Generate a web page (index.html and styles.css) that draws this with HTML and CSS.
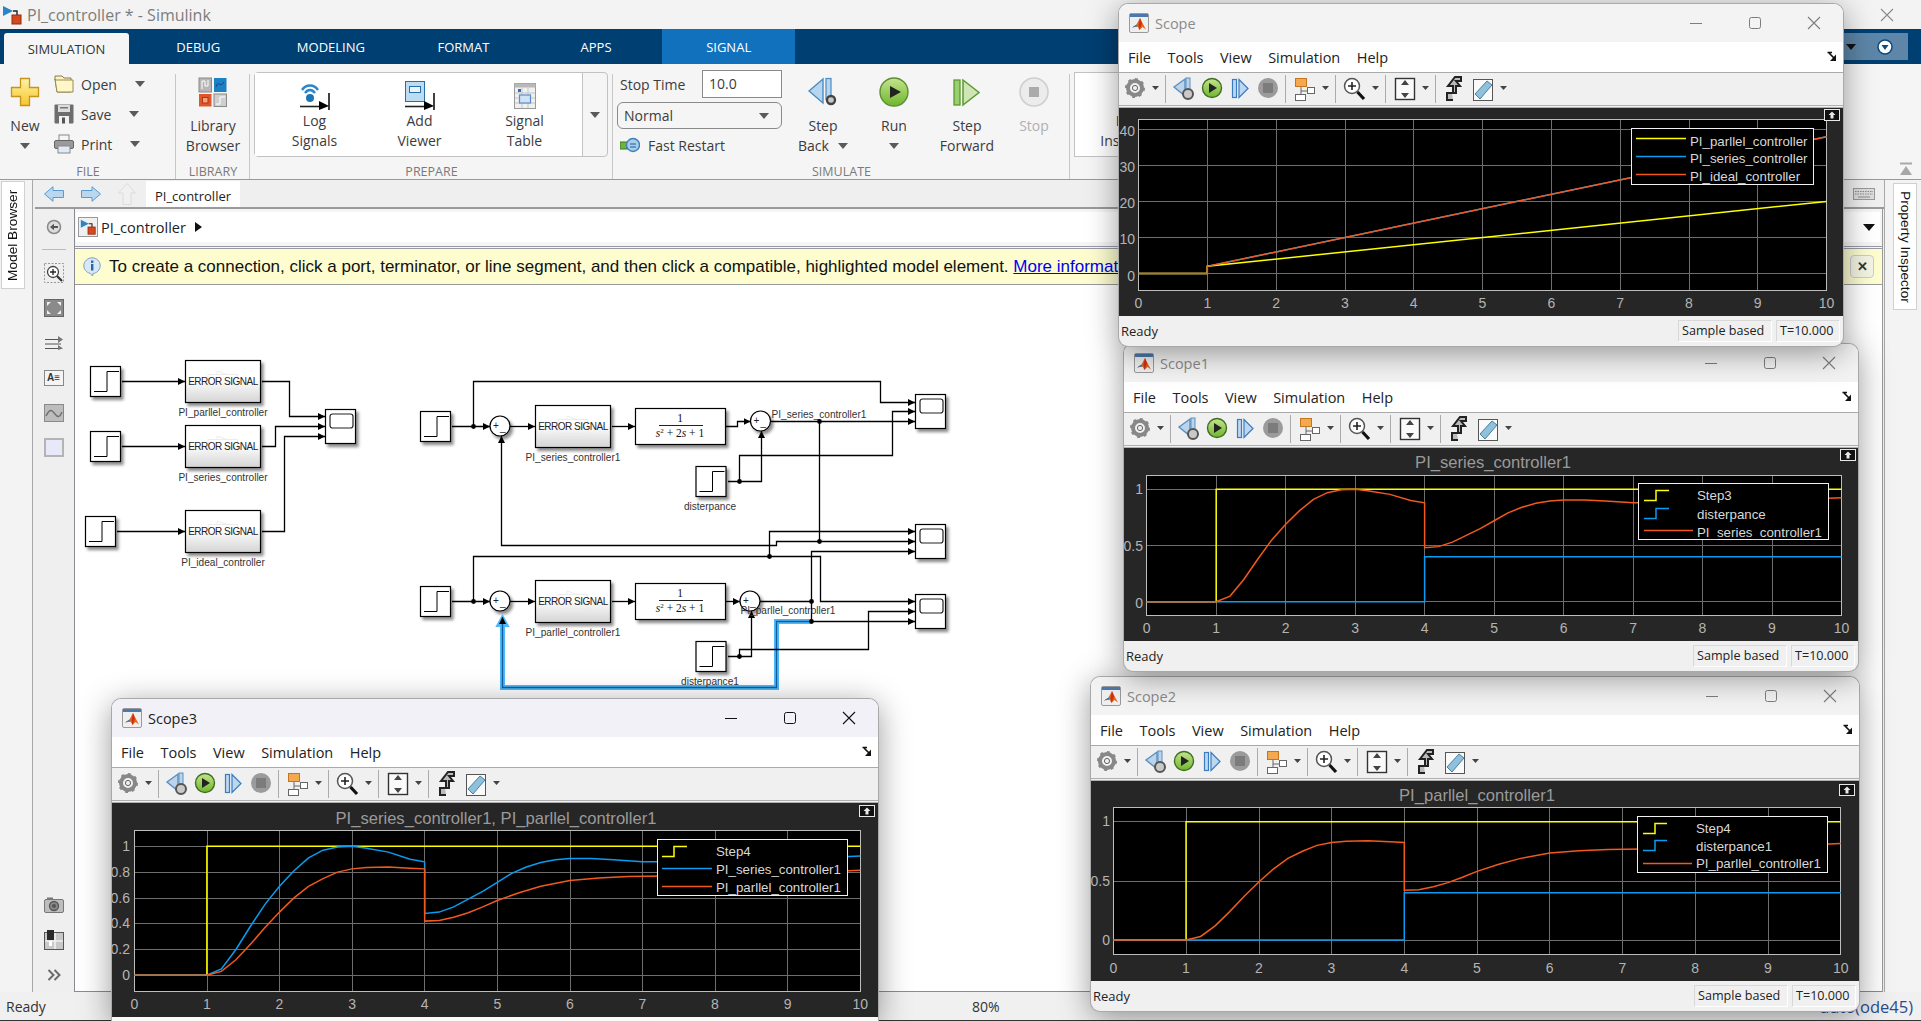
FILE: index.html
```html
<!DOCTYPE html>
<html lang="en">
<head>
  <meta charset="UTF-8">
  <title>PI_controller * - Simulink</title>
  <link rel="stylesheet" href="styles.css">
</head>
<body>

<!-- shared icons -->
<svg class="defs" width="0" height="0">
  <defs>
    <linearGradient id="blockFill" x1="0" y1="0" x2="0" y2="1">
      <stop offset="0.45" stop-color="#ffffff"/>
      <stop offset="1" stop-color="#d4d4d4"/>
    </linearGradient>
    <linearGradient id="runFill" x1="0" y1="0" x2="0" y2="1">
      <stop offset="0" stop-color="#c4e58c"/>
      <stop offset="1" stop-color="#6fb52e"/>
    </linearGradient>
    <linearGradient id="plusFill" x1="0" y1="0" x2="0" y2="1">
      <stop offset="0" stop-color="#fff3a6"/>
      <stop offset="1" stop-color="#f6c52a"/>
    </linearGradient>
    <filter id="blockShadow" x="-20%" y="-20%" width="150%" height="150%">
      <feDropShadow dx="2.5" dy="3" stdDeviation="1.6" flood-color="#000" flood-opacity="0.45"/>
    </filter>
    <marker id="arrow" viewBox="0 0 7 7" refX="7" refY="3.5" markerWidth="7" markerHeight="7" markerUnits="userSpaceOnUse" orient="auto">
      <path d="M0 0L7 3.5L0 7Z" fill="#000"/>
    </marker>

    <g id="stepBlock" filter="url(#blockShadow)">
      <rect x="0.5" y="0.5" width="30" height="30" fill="#fff" stroke="#000" stroke-width="1.2"/>
      <path d="M4 25.5H17V5.5H29" fill="none" stroke="#000"/>
    </g>
    <g id="scopeBlock" filter="url(#blockShadow)">
      <rect x="0.5" y="0.5" width="30" height="34" fill="#fff" stroke="#000" stroke-width="1.2"/>
      <rect x="5" y="5" width="23" height="14" rx="2.5" fill="#fff" stroke="#222" stroke-width="1.2"/>
    </g>
    <g id="errorBlock" filter="url(#blockShadow)">
      <rect x="0.5" y="0.5" width="75" height="42" fill="url(#blockFill)" stroke="#000" stroke-width="1.2"/>
      <path d="M23 14.5H52.5V28.5H23ZM32 14.5V11L42 14.5" fill="none" stroke="#ececec"/>
    </g>
    <g id="tfBlock" filter="url(#blockShadow)">
      <rect x="0.5" y="0.5" width="90" height="36" fill="#fff" stroke="#000" stroke-width="1.2"/>
    </g>
    <g id="sumBlock" filter="url(#blockShadow)">
      <circle cx="0" cy="0" r="10" fill="#fff" stroke="#000" stroke-width="1.2"/>
    </g>

    <symbol id="matlabIcon" viewBox="0 0 20 20">
      <rect x="0.5" y="0.5" width="19" height="19" rx="1.5" fill="#efefef" stroke="#9a9a9a"/>
      <rect x="1" y="1" width="18" height="3" fill="#4b79ab"/>
      <path d="M3 14.5L7.5 11.5L11 5L14 11L17 16.5L13.5 14L10.5 17L8.5 13.5Z" fill="#e8641b"/>
      <path d="M3 14.5L7.5 11.5L8.5 13.5Z" fill="#3c7fb8"/>
      <path d="M11 5L13 10.5L10.5 17L9.5 12Z" fill="#c8321a"/>
    </symbol>

    <symbol id="simulinkIcon" viewBox="0 0 20 20">
      <path d="M1 1L11 6L1 11Z" fill="#2a85c7"/>
      <path d="M11 6L15 6V11" fill="none" stroke="#222" stroke-width="1.4"/>
      <rect x="10" y="10" width="9" height="9" fill="#d6491f" stroke="#8f2c10"/>
    </symbol>

    <symbol id="expandIcon" viewBox="0 0 16 12">
      <rect x="0.5" y="0.5" width="15" height="11" fill="#111" stroke="#e8e8e8"/>
      <path d="M8 2.5L11.5 6H9.5V9.5H6.5V6H4.5Z" fill="#e8e8e8"/>
    </symbol>

    <symbol id="dockIcon" viewBox="0 0 10 12">
      <path d="M0.5 1.5H5M2 2L7 7" fill="none" stroke="#111" stroke-width="1.6"/>
      <path d="M9 3.5V10H3Z" fill="#111"/>
    </symbol>

    <symbol id="scopeTools" viewBox="0 0 390 32">
      <!-- gear -->
      <circle cx="16" cy="15" r="7" fill="none" stroke="#888" stroke-width="4"/>
      <circle cx="16" cy="15" r="9" fill="none" stroke="#888" stroke-width="2" stroke-dasharray="3 4"/>
      <circle cx="16" cy="15" r="2.6" fill="#eee" stroke="#666"/>
      <path d="M33 13H40L36.5 17Z" fill="#444"/>
      <path d="M46.5 2V30M166.5 2V30M216.5 2V30M266.5 2V30M316.5 2V30" stroke="#ababab"/>
      <!-- step back -->
      <path d="M55 14L66 6V23Z" fill="#bcd4ea" stroke="#5a8fbf" stroke-width="1.4"/>
      <rect x="67" y="5" width="4" height="17" fill="#bcd4ea" stroke="#5a8fbf"/>
      <circle cx="69" cy="21" r="5" fill="#c9c9c9" stroke="#555" stroke-width="2"/>
      <!-- run -->
      <circle cx="93" cy="15" r="9.5" fill="url(#runFill)" stroke="#3f6e22" stroke-width="1.4"/>
      <path d="M90 10L98 15L90 20Z" fill="#222"/>
      <!-- step forward -->
      <rect x="113.5" y="6.5" width="4" height="18" fill="#bcd8f0" stroke="#3b7cc0" stroke-width="1.2"/>
      <path d="M120 6.5L129 15.5L120 24.5Z" fill="#bcd8f0" stroke="#3b7cc0" stroke-width="1.2"/>
      <!-- stop -->
      <circle cx="149" cy="15" r="10" fill="#9b9b9b"/>
      <rect x="144" y="10" width="10" height="10" fill="#7c7c7c"/>
      <!-- model link -->
      <rect x="176.5" y="5.5" width="11" height="8" fill="#f5a94f" stroke="#c4761c"/>
      <rect x="188.5" y="14.5" width="7" height="6" fill="#fff" stroke="#666"/>
      <rect x="176.5" y="21.5" width="10" height="6" fill="#fff" stroke="#666"/>
      <path d="M182 14V18H188M182 21V18" fill="none" stroke="#666"/>
      <path d="M203 13H210L206.5 17Z" fill="#444"/>
      <!-- zoom -->
      <circle cx="233" cy="13" r="7.5" fill="#fff" stroke="#555" stroke-width="1.5"/>
      <path d="M229 13H237M233 9V17" stroke="#222" stroke-width="1.6"/>
      <path d="M238.5 19L245 26" stroke="#111" stroke-width="3.2"/>
      <path d="M253 13H260L256.5 17Z" fill="#444"/>
      <!-- autoscale -->
      <rect x="276.5" y="5.5" width="19" height="21" fill="#fafafa" stroke="#333" stroke-width="1.4"/>
      <path d="M286 7L290 12H282ZM286 25L290 20H282Z" fill="#444"/>
      <path d="M303 13H310L306.5 17Z" fill="#444"/>
      <!-- plot type -->
      <path d="M334 27H328V20H334V13H329L336 4H342V8H337L341 13H337V20H333" fill="#bbb" stroke="#222" stroke-width="2"/>
      <!-- ruler -->
      <rect x="354.5" y="6.5" width="19" height="21" fill="#fafafa" stroke="#555"/>
      <path d="M356 21L368 8L373 12L361 26Z" fill="#8fc0dc" stroke="#4a7f9c"/>
      <path d="M381 13H388L384.5 17Z" fill="#444"/>
    </symbol>
  </defs>
</svg>

<div class="app">

  <header class="titlebar">
    <svg class="title-icon" width="20" height="20"><use href="#simulinkIcon"/></svg>
    <span class="title-text">PI_controller * - Simulink</span>
    <svg class="title-close" width="14" height="14" viewBox="0 0 14 14"><path d="M1 1L13 13M13 1L1 13" stroke="#8a8a8a" stroke-width="1.1"/></svg>
  </header>

  <nav class="tabs">
    <div class="tab tab-active">SIMULATION</div>
    <div class="tab">DEBUG</div>
    <div class="tab">MODELING</div>
    <div class="tab">FORMAT</div>
    <div class="tab">APPS</div>
    <div class="tab tab-signal">SIGNAL</div>
    <div class="quick-access">
      <i class="caret caret-black"></i>
      <svg width="16" height="16" viewBox="0 0 16 16"><circle cx="8" cy="8" r="7" fill="#fff" stroke="#0b4a80" stroke-width="1.5"/><path d="M4.5 6H11.5L8 11Z" fill="#0b4a80"/></svg>
    </div>
  </nav>

  <div class="ribbon">

    <section class="rib-group group-file">
      <div class="rib-body">
        <div class="rb rb-new">
          <svg class="rb-icon" width="30" height="30" viewBox="0 0 30 30"><path d="M10.5 1.5H19.5V10.5H28.5V19.5H19.5V28.5H10.5V19.5H1.5V10.5H10.5Z" fill="url(#plusFill)" stroke="#c4951a" stroke-width="1.3"/></svg>
          <span>New</span>
          <span class="rb-line"><i class="caret"></i></span>
        </div>
        <div class="file-list">
          <div class="file-row">
            <svg width="20" height="20" viewBox="0 0 20 20"><path d="M1 5V2H8L10 4H17V18H3Z" fill="#fdf3c0" stroke="#8a7a4a"/><path d="M1 5L3 18H19V6H1Z" fill="#fff6c9" stroke="#9a8a50"/></svg>
            <span>Open</span><i class="caret"></i>
          </div>
          <div class="file-row">
            <svg width="20" height="20" viewBox="0 0 20 20"><rect x="0.5" y="0.5" width="19" height="19" rx="1" fill="#6d6d6d"/><rect x="4" y="1" width="12" height="7" fill="#dcdcdc"/><rect x="6" y="3" width="8" height="1.5" fill="#777"/><rect x="5" y="12" width="10" height="8" fill="#f2f2f2"/><rect x="8" y="13.5" width="3" height="6" fill="#555"/></svg>
            <span>Save</span><i class="caret"></i>
          </div>
          <div class="file-row">
            <svg width="20" height="20" viewBox="0 0 20 20"><rect x="5" y="1" width="10" height="6" fill="#f5f5f5" stroke="#888"/><rect x="0.5" y="6.5" width="19" height="8" rx="1.5" fill="#9a9a9a" stroke="#666"/><rect x="4" y="12" width="12" height="7" fill="#dfeaf5" stroke="#888"/></svg>
            <span>Print</span><i class="caret"></i>
          </div>
        </div>
      </div>
      <div class="rib-label">FILE</div>
    </section>

    <section class="rib-group group-library">
      <div class="rib-body">
        <div class="rb rb-wide">
          <svg class="rb-icon" width="30" height="30" viewBox="0 0 30 30">
            <rect x="1" y="1" width="12.5" height="14" fill="#b7b7b7" stroke="#8a8a8a"/><path d="M4 12V4H7V9H10V3" fill="none" stroke="#fff"/>
            <rect x="16" y="1" width="12.5" height="14" fill="#1e80c4"/><path d="M18 10C20 2 22 12 26 5" fill="none" stroke="#0b4a80"/>
            <rect x="1" y="17" width="12.5" height="12.5" fill="#e0562a"/><rect x="4.5" y="20.5" width="5.5" height="5.5" fill="#f7a07c" stroke="#a83a14"/>
            <rect x="16" y="17" width="12.5" height="12.5" fill="#cfcfcf" stroke="#8a8a8a"/><path d="M18 27H22V20H27" fill="none" stroke="#fff"/>
          </svg>
          <span>Library</span>
          <span>Browser</span>
        </div>
      </div>
      <div class="rib-label">LIBRARY</div>
    </section>

    <section class="rib-group group-prepare">
      <div class="rib-body">
        <div class="prepare-box">
          <div class="prepare-items">
            <div class="rb rb-prep">
              <svg width="30" height="30" viewBox="0 0 30 30">
                <path d="M2 9C6 3 14 3 18 9M5 12C8 8 12 8 15 12" fill="none" stroke="#2a86cc" stroke-width="2.4"/>
                <circle cx="10" cy="17" r="4" fill="#1c74b8"/>
                <path d="M0 25.5H20" stroke="#222" stroke-width="1.6"/><path d="M29 12V29" stroke="#111" stroke-width="1.6"/><path d="M19 20L29 25L19 29Z" fill="#000"/>
              </svg>
              <span>Log</span>
              <span>Signals</span>
            </div>
            <div class="rb rb-prep">
              <svg width="30" height="30" viewBox="0 0 30 30">
                <rect x="0.5" y="0.5" width="19" height="20" fill="#bcdcf2" stroke="#2a6ea8"/><rect x="4.5" y="5.5" width="11" height="6" fill="#e8f3fb" stroke="#2a6ea8"/>
                <path d="M0 25.5H20" stroke="#222" stroke-width="1.6"/><path d="M29 12V29" stroke="#111" stroke-width="1.6"/><path d="M19 20L29 25L19 29Z" fill="#000"/>
              </svg>
              <span>Add</span>
              <span>Viewer</span>
            </div>
            <div class="rb rb-prep">
              <svg width="30" height="30" viewBox="0 0 30 30">
                <rect x="4.5" y="2.5" width="21" height="25" fill="#f0f0f0" stroke="#9a9a9a"/>
                <rect x="4.5" y="2.5" width="21" height="4" fill="#b8b8b8"/>
                <path d="M5 12H25M5 17H25M5 22H25M12 7V27M18 7V27" stroke="#c4c4c4"/>
                <rect x="8" y="8" width="3" height="3" fill="#2f6fb0"/>
                <rect x="9.5" y="14" width="11" height="8" fill="#cfe2f6" stroke="#5a8fc8" stroke-width="1.2"/>
              </svg>
              <span>Signal</span>
              <span>Table</span>
            </div>
          </div>
          <div class="prepare-drop"><i class="caret"></i></div>
        </div>
      </div>
      <div class="rib-label">PREPARE</div>
    </section>

    <section class="rib-group group-simulate">
      <div class="rib-body">
        <div class="sim-form">
          <div class="stop-row"><span>Stop Time</span><span class="stop-input">10.0</span></div>
          <div class="mode-select"><span>Normal</span><i class="caret"></i></div>
          <div class="restart-row">
            <svg width="20" height="18" viewBox="0 0 20 18"><rect x="0" y="6" width="7" height="7" fill="#6db33f" stroke="#3e7a1c"/><circle cx="13" cy="9" r="6.5" fill="#a9cdec" stroke="#3d7fbb" stroke-width="1.4"/><path d="M10 8H16M10 11H16" stroke="#1f5a92"/></svg>
            <span>Fast Restart</span>
          </div>
        </div>
        <div class="rb rb-back">
          <svg class="rb-icon" width="30" height="30" viewBox="0 0 30 30"><path d="M1 14L15 2V26Z" fill="#b7d5ee" stroke="#4d8cc2" stroke-width="1.4"/><rect x="18" y="1.5" width="5" height="21" fill="#b7d5ee" stroke="#4d8cc2" stroke-width="1.2"/><circle cx="23" cy="23" r="4" fill="#c9c9c9" stroke="#444" stroke-width="2.4"/></svg>
          <span>Step</span>
          <span class="rb-line">Back <i class="caret"></i></span>
        </div>
        <div class="rb rb-run">
          <svg class="rb-icon" width="30" height="30" viewBox="0 0 30 30"><circle cx="15" cy="15" r="14" fill="url(#runFill)" stroke="#5c8f33" stroke-width="1.4"/><path d="M11 9L22 15L11 21Z" fill="#222"/></svg>
          <span>Run</span>
          <span class="rb-line"><i class="caret"></i></span>
        </div>
        <div class="rb rb-forward">
          <svg class="rb-icon" width="30" height="30" viewBox="0 0 30 30"><rect x="2" y="3" width="6" height="25" fill="#9bcf6d" stroke="#5a9a32" stroke-width="1.3"/><path d="M11 3L27 15.5L11 28Z" fill="#cfe6b4" stroke="#5a9a32" stroke-width="1.5"/></svg>
          <span>Step</span>
          <span>Forward</span>
        </div>
        <div class="rb rb-stop">
          <svg class="rb-icon" width="30" height="30" viewBox="0 0 30 30"><circle cx="15" cy="15" r="14" fill="#ececec" stroke="#cfcfcf" stroke-width="1.6"/><rect x="10" y="10" width="10" height="10" fill="#ababab"/></svg>
          <span>Stop</span>
        </div>
      </div>
      <div class="rib-label">SIMULATE</div>
    </section>

    <section class="rib-group group-review">
      <div class="rib-body">
        <div class="review-box">
          <div class="rb rb-review">
            <svg width="30" height="30" viewBox="0 0 30 30"><rect x="3" y="2" width="24" height="24" fill="#ddd" stroke="#999"/></svg>
            <span>Data</span>
            <span>Inspector</span>
          </div>
        </div>
      </div>
    </section>

    <svg class="rib-collapse" width="14" height="14" viewBox="0 0 14 14"><path d="M1 1.5H13" stroke="#a8a8a8" stroke-width="2"/><path d="M7 4L13 13H1Z" fill="#a8a8a8"/></svg>
  </div>

  <div class="workspace">

    <aside class="left-rail">
      <div class="side-tab side-tab-left">Model Browser</div>
    </aside>

    <main class="main">
      <div class="doc-tabs">
        <svg width="20" height="16" viewBox="0 0 20 16"><path d="M0.5 8L9 0.7V4.5H19.5V11.5H9V15.3Z" fill="#b9d8f0" stroke="#5a9ad0"/></svg>
        <svg width="20" height="16" viewBox="0 0 20 16"><path d="M19.5 8L11 0.7V4.5H0.5V11.5H11V15.3Z" fill="#b9d8f0" stroke="#5a9ad0"/></svg>
        <svg class="doc-up" width="18" height="22" viewBox="0 0 18 22"><path d="M9 0.5L17.5 10H13V21.5H5V10H0.5Z" fill="#f0f0f0" stroke="#dcdcdc"/></svg>
        <div class="doc-tab">PI_controller</div>
        <svg class="doc-keys" width="22" height="12" viewBox="0 0 22 12"><rect x="0.5" y="0.5" width="21" height="11" fill="#ddd" stroke="#999"/><path d="M2 3.5H20M2 6H20" stroke="#8a8a8a" stroke-dasharray="1.5 1"/><path d="M5 9H17" stroke="#8a8a8a"/></svg>
      </div>

      <div class="doc-body">
        <div class="tool-col">
          <div class="tool-slot"><svg width="16" height="16" viewBox="0 0 16 16"><circle cx="8" cy="8" r="6.5" fill="#ddd" stroke="#888" stroke-width="1.5"/><path d="M4 8L8 4.8V7H12V9H8V11.2Z" fill="#555"/></svg></div>
          <hr class="tool-sep">
          <div class="tool-slot"><svg width="20" height="20" viewBox="0 0 20 20"><rect x="0.5" y="0.5" width="19" height="19" fill="none" stroke="#999" stroke-dasharray="2 1.5"/><circle cx="9" cy="9" r="5.5" fill="#fff" stroke="#444" stroke-width="1.3"/><path d="M6 9H12M9 6V12" stroke="#222" stroke-width="1.3"/><path d="M13 13L18 18" stroke="#333" stroke-width="2.2"/></svg></div>
          <div class="tool-slot"><svg width="20" height="18" viewBox="0 0 20 18"><rect x="0.5" y="0.5" width="19" height="17" fill="#8a8a8a" stroke="#666"/><path d="M3 3H7L3 7ZM17 3H13L17 7ZM3 15H7L3 11ZM17 15H13L17 11Z" fill="#eee"/></svg></div>
          <div class="tool-slot"><svg width="18" height="14" viewBox="0 0 18 14"><path d="M0 3.5H14M0 8H16M0 12.5H14" stroke="#555"/><path d="M13 0L18 3.5L13 7ZM13 9L18 12.5L13 14Z" fill="#777"/></svg></div>
          <div class="tool-slot"><div class="tool-text">A≡</div></div>
          <div class="tool-slot"><svg width="20" height="18" viewBox="0 0 20 18"><rect x="0.5" y="0.5" width="19" height="17" fill="#bdbdbd" stroke="#8a8a8a"/><path d="M2 12C6 4 8 6 11 10S16 13 18 8" fill="none" stroke="#6f6f6f" stroke-width="1.4"/></svg></div>
          <div class="tool-slot"><div class="tool-rect"></div></div>
          <div class="tool-bottom">
            <div class="tool-slot"><svg width="20" height="16" viewBox="0 0 20 16"><rect x="0.5" y="2.5" width="19" height="13" rx="1.5" fill="#bdbdbd" stroke="#777"/><rect x="3" y="0.5" width="6" height="2" fill="#777"/><circle cx="10" cy="9" r="4.5" fill="#888" stroke="#555" stroke-width="1.3"/><circle cx="10" cy="9" r="2" fill="#555"/></svg></div>
            <div class="tool-slot"><svg width="20" height="20" viewBox="0 0 20 20"><rect x="0.5" y="2.5" width="19" height="17" fill="#c8c8c8" stroke="#555"/><path d="M11 3V19M1 11H19" stroke="#f0f0f0" stroke-width="1.6"/><rect x="3" y="0" width="7" height="10" fill="#2a2a2a"/><rect x="5" y="11" width="3" height="5" fill="#fff"/></svg></div>
            <div class="tool-slot"><svg width="14" height="12" viewBox="0 0 14 12"><path d="M1.5 1L6.5 6L1.5 11M7.5 1L12.5 6L7.5 11" fill="none" stroke="#6a6a6a" stroke-width="2"/></svg></div>
          </div>
        </div>

        <div class="doc">
          <div class="address">
            <div class="address-inner">
              <span class="address-icon"><svg width="16" height="16"><use href="#simulinkIcon"/></svg></span>
              <span class="address-name">PI_controller</span>
              <i class="crumb"></i>
              <i class="caret caret-black caret-big"></i>
            </div>
          </div>

          <div class="hint">
            <svg width="18" height="20" viewBox="0 0 18 20"><path d="M9 0.8C13.6 0.8 17.2 4.2 17.2 8.6S13.6 16.4 10 16.4L9.6 19L7 16.2C3.4 15.6 0.8 12.4 0.8 8.6S4.4 0.8 9 0.8Z" fill="#d8e8f6" stroke="#7a9fc2"/><rect x="8" y="3.5" width="2.4" height="2.4" fill="#2766a8"/><rect x="8" y="7" width="2.4" height="6.5" fill="#2766a8"/></svg>
            <span class="hint-text">To create a connection, click a port, terminator, or line segment, and then click a compatible, highlighted model element. <a class="hint-link">More information</a></span>
            <div class="hint-close">✕</div>
          </div>

          <div class="canvas">
            <svg class="diagram" width="1807" height="705" viewBox="75 286 1807 705">
              <!-- left group -->
              <use href="#stepBlock" x="90" y="367"/>
              <use href="#stepBlock" x="90" y="432"/>
              <use href="#stepBlock" x="85" y="517"/>
              <use href="#errorBlock" x="185" y="361"/>
              <use href="#errorBlock" x="185" y="426"/>
              <use href="#errorBlock" x="185" y="511"/>
              <use href="#scopeBlock" x="325" y="410"/>
              <path class="wire" d="M122 382.5H185"/>
              <path class="wire" d="M122 447.5H185"/>
              <path class="wire" d="M117 532.5H185"/>
              <path class="wire" d="M262 382.5H289.5V417.5H325"/>
              <path class="wire" d="M262 447.5H275.5V427.5H325"/>
              <path class="wire" d="M262 532.5H284.5V437.5H325"/>
              <text class="blk-text" x="223" y="386">ERROR SIGNAL</text>
              <text class="blk-text" x="223" y="451">ERROR SIGNAL</text>
              <text class="blk-text" x="223" y="536">ERROR SIGNAL</text>
              <text class="blk-label" x="223" y="417">PI_parllel_controller</text>
              <text class="blk-label" x="223" y="482">PI_series_controller</text>
              <text class="blk-label" x="223" y="567">PI_ideal_controller</text>

              <!-- series loop -->
              <use href="#stepBlock" x="420" y="412"/>
              <use href="#sumBlock" x="500" y="427"/>
              <use href="#errorBlock" x="535" y="406"/>
              <use href="#tfBlock" x="635" y="409"/>
              <use href="#sumBlock" x="760.5" y="422"/>
              <use href="#stepBlock" x="695.5" y="467"/>
              <use href="#scopeBlock" x="915" y="395"/>
              <use href="#scopeBlock" x="915" y="525"/>
              <path class="wire" d="M452 427.5H490"/>
              <path class="wire" d="M473.5 427.5V382.5H880.5V403.5H915"/>
              <path class="wire" d="M510 427.5H535"/>
              <path class="wire" d="M612 427.5H635"/>
              <path class="wire" d="M726 427.5H737.5V422.5H750.5"/>
              <path class="wire" d="M771 422.5H915"/>
              <path class="wire plain" d="M819.5 422.5V542.5"/>
              <path class="wire" d="M728 482.5H761.5V432"/>
              <path class="wire" d="M739.5 482.5V456.5H892.5V412.5H915"/>
              <path class="wire" d="M819.5 542.5H776.5V546.5H501.5V437"/>
              <path class="wire" d="M819.5 542.5H915"/>
              <path class="wire" d="M769.5 557.5V532.5H915"/>
              <text class="sum-sign" x="493" y="430">+</text><text class="sum-sign" x="500" y="432">_</text>
              <text class="sum-sign" x="753.5" y="425">+</text><text class="sum-sign" x="760.5" y="427">_</text>
              <text class="blk-text" x="573" y="431">ERROR SIGNAL</text>
              <text class="blk-label" x="573" y="461.5">PI_series_controller1</text>
              <text class="tf-num" x="680" y="423">1</text>
              <path class="tf-line" d="M659 426.5H703"/>
              <text class="tf-den" x="680" y="438"><tspan font-style="italic">s</tspan><tspan dy="-4" font-size="7">2</tspan><tspan dy="4"> + 2</tspan><tspan font-style="italic">s</tspan> + 1</text>
              <text class="blk-label" x="710" y="511">disterpance</text>
              <text class="blk-label" x="819" y="419">PI_series_controller1</text>

              <!-- parallel loop -->
              <use href="#stepBlock" x="420" y="587"/>
              <use href="#sumBlock" x="500" y="602"/>
              <use href="#errorBlock" x="535" y="581"/>
              <use href="#tfBlock" x="635" y="584"/>
              <use href="#sumBlock" x="750" y="602"/>
              <use href="#stepBlock" x="695.5" y="642"/>
              <use href="#scopeBlock" x="915" y="595"/>
              <path class="wire-glow" d="M811 622.5H776.5V688.5H502.5V620"/>
              <path class="glow-tip" d="M502.5 617L508 627H497Z"/>
              <path class="wire" d="M452 602.5H490"/>
              <path class="wire" d="M473.5 602.5V557.5H820.5V602.5H915"/>
              <path class="wire" d="M510 602.5H535"/>
              <path class="wire" d="M612 602.5H635"/>
              <path class="wire" d="M726 602.5H740"/>
              <path class="wire plain" d="M760 602.5H811.5V622.5"/>
              <path class="wire" d="M811.5 602.5V552.5H915"/>
              <path class="wire" d="M811.5 622.5H915"/>
              <path class="wire wire-selected" d="M811 622.5H776.5V688.5H502.5V618"/>
              <path class="wire" d="M728 657.5H751.5V612"/>
              <path class="wire" d="M739.5 657.5V650.5H868.5V612.5H915"/>
              <text class="sum-sign" x="493" y="605">+</text><text class="sum-sign" x="500" y="607">_</text>
              <text class="sum-sign" x="743" y="605">+</text><text class="sum-sign" x="750" y="607">_</text>
              <text class="blk-text" x="573" y="606">ERROR SIGNAL</text>
              <text class="blk-label" x="573" y="636.5">PI_parllel_controller1</text>
              <text class="tf-num" x="680" y="598">1</text>
              <path class="tf-line" d="M659 601.5H703"/>
              <text class="tf-den" x="680" y="613"><tspan font-style="italic">s</tspan><tspan dy="-4" font-size="7">2</tspan><tspan dy="4"> + 2</tspan><tspan font-style="italic">s</tspan> + 1</text>
              <text class="blk-label" x="710" y="686">disterpance1</text>
              <text class="blk-label" x="788" y="615">PI_parllel_controller1</text>

              <g class="dots">
                <circle cx="473.5" cy="427.5" r="2.4"/><circle cx="739.5" cy="482.5" r="2.4"/>
                <circle cx="819.5" cy="422.5" r="2.4"/><circle cx="819.5" cy="542.5" r="2.4"/>
                <circle cx="769.5" cy="557.5" r="2.4"/><circle cx="473.5" cy="602.5" r="2.4"/>
                <circle cx="811.5" cy="602.5" r="2.4"/><circle cx="811.5" cy="622.5" r="2.4"/>
                <circle cx="739.5" cy="657.5" r="2.4"/>
              </g>
            </svg>
          </div>
        </div>
      </div>
    </main>

    <aside class="right-rail">
      <div class="side-tab side-tab-right">Property Inspector</div>
    </aside>
  </div>

  <footer class="statusbar">
    <span class="status-ready">Ready</span>
    <span>80%</span>
    <span class="status-solver">auto(ode45)</span>
  </footer>

  <!-- Scope2 -->
  <section class="scope scope-two">
    <header class="scope-title">
      <svg width="20" height="20"><use href="#matlabIcon"/></svg><span>Scope2</span>
      <div class="win-btns">
        <svg width="14" height="14" viewBox="0 0 14 14"><path d="M1 7.5H13" stroke="currentColor"/></svg>
        <svg width="12" height="14" viewBox="0 0 12 14"><rect x="0.5" y="1.5" width="11" height="11" rx="2" fill="none" stroke="currentColor"/></svg>
        <svg width="14" height="14" viewBox="0 0 14 14"><path d="M1 1L13 13M13 1L1 13" stroke="currentColor" stroke-width="1.1"/></svg>
      </div>
    </header>
    <nav class="scope-menu">
      <span>File</span><span>Tools</span><span>View</span><span>Simulation</span><span>Help</span>
      <svg class="dock" width="10" height="12"><use href="#dockIcon"/></svg>
    </nav>
    <div class="scope-tools"><svg width="390" height="32"><use href="#scopeTools"/></svg></div>
    <div class="scope-plot">
      <svg viewBox="1091 780 768 200">
        <rect class="axes" x="1113.5" y="806.5" width="727" height="147"/>
        <path class="grid" d="M1186 807V953M1259 807V953M1331.5 807V953M1404.5 807V953M1477 807V953M1549.5 807V953M1622.5 807V953M1695 807V953M1768 807V953M1114 820.5H1840M1114 880.5H1840M1114 939.5H1840"/>
        <g class="data" transform="translate(1113.3 939) scale(72.74 -118.3)">
          <path class="sig-yellow" d="M0 0H1V1H10"/>
          <path class="sig-blue" d="M0 0H4V0.4H10"/>
          <path class="sig-orange" d="M0 0H1L1.2 .03 1.4 .12 1.6 .24 1.8 .37 2 .49 2.2 .6 2.4 .69 2.6 .75 2.8 .8 3 .825 3.2 .835 3.5 .84 3.8 .83 4 .825V.42L4.2 .425 4.4 .45 4.6 .485 4.8 .53 5 .58 5.3 .64 5.6 .69 6 .735 6.4 .755 6.8 .765 7.3 .77 8 .775 9 .79 10 .815"/>
        </g>
        <text class="tick tick-y" x="1110" y="825">1</text><text class="tick tick-y" x="1110" y="885">0.5</text><text class="tick tick-y" x="1110" y="944">0</text>
        <g class="tick tick-x">
          <text x="1113.3" y="972">0</text><text x="1186" y="972">1</text><text x="1258.8" y="972">2</text><text x="1331.5" y="972">3</text><text x="1404.3" y="972">4</text><text x="1477" y="972">5</text><text x="1549.7" y="972">6</text><text x="1622.5" y="972">7</text><text x="1695.2" y="972">8</text><text x="1768" y="972">9</text><text x="1840.7" y="972">10</text>
        </g>
        <text class="plot-title" x="1477" y="800">PI_parllel_controller1</text>
        <rect class="legend" x="1637.5" y="815.5" width="190" height="56"/>
        <path class="sig-yellow" d="M1643 832.5H1655V822.5H1667"/>
        <path class="sig-blue" d="M1643 849.5H1655V839.5H1667"/>
        <path class="sig-orange" d="M1643 862.5H1692"/>
        <text class="legend-text" x="1696" y="832">Step4</text><text class="legend-text" x="1696" y="850">disterpance1</text><text class="legend-text" x="1696" y="867">PI_parllel_controller1</text>
        <use href="#expandIcon" x="1839" y="783" width="16" height="12"/>
      </svg>
    </div>
    <footer class="scope-status"><span>Ready</span><span class="stat-box stat-sample">Sample based</span><span class="stat-box stat-time">T=10.000</span></footer>
  </section>

  <!-- Scope1 -->
  <section class="scope scope-one">
    <header class="scope-title">
      <svg width="20" height="20"><use href="#matlabIcon"/></svg><span>Scope1</span>
      <div class="win-btns">
        <svg width="14" height="14" viewBox="0 0 14 14"><path d="M1 7.5H13" stroke="currentColor"/></svg>
        <svg width="12" height="14" viewBox="0 0 12 14"><rect x="0.5" y="1.5" width="11" height="11" rx="2" fill="none" stroke="currentColor"/></svg>
        <svg width="14" height="14" viewBox="0 0 14 14"><path d="M1 1L13 13M13 1L1 13" stroke="currentColor" stroke-width="1.1"/></svg>
      </div>
    </header>
    <nav class="scope-menu">
      <span>File</span><span>Tools</span><span>View</span><span>Simulation</span><span>Help</span>
      <svg class="dock" width="10" height="12"><use href="#dockIcon"/></svg>
    </nav>
    <div class="scope-tools"><svg width="390" height="32"><use href="#scopeTools"/></svg></div>
    <div class="scope-plot">
      <svg viewBox="1124 448 734 193">
        <rect class="axes" x="1146.5" y="475.5" width="695" height="140"/>
        <path class="grid" d="M1216 476V615M1285.5 476V615M1355 476V615M1424.5 476V615M1494 476V615M1563.5 476V615M1633 476V615M1702.5 476V615M1772 476V615M1147 489.5H1841M1147 545.5H1841M1147 601.5H1841"/>
        <g class="data" transform="translate(1146.7 601.7) scale(69.48 -112.4)">
          <path class="sig-yellow" d="M0 0H1V1H10"/>
          <path class="sig-blue" d="M0 0H4V0.4H10"/>
          <path class="sig-orange" d="M0 0H1L1.2 .05 1.4 .2 1.6 .38 1.8 .55 2 .69 2.2 .81 2.4 .91 2.6 .97 2.8 .995 3 1 3.2 .985 3.5 .955 3.8 .9 4 .88V.48L4.2 .49 4.4 .53 4.6 .59 4.8 .65 5 .72 5.2 .79 5.4 .84 5.6 .875 5.8 .895 6 .905 6.3 .905 6.6 .895 7 .88 8 .88 9 .9 10 .925"/>
        </g>
        <text class="tick tick-y" x="1143" y="494">1</text><text class="tick tick-y" x="1143" y="551">0.5</text><text class="tick tick-y" x="1143" y="608">0</text>
        <g class="tick tick-x">
          <text x="1146.7" y="633">0</text><text x="1216.2" y="633">1</text><text x="1285.7" y="633">2</text><text x="1355.1" y="633">3</text><text x="1424.6" y="633">4</text><text x="1494.1" y="633">5</text><text x="1563.6" y="633">6</text><text x="1633.1" y="633">7</text><text x="1702.5" y="633">8</text><text x="1772" y="633">9</text><text x="1841.5" y="633">10</text>
        </g>
        <text class="plot-title" x="1493" y="468">PI_series_controller1</text>
        <rect class="legend" x="1638.5" y="483.5" width="190" height="56"/>
        <path class="sig-yellow" d="M1644 500.5H1656V490.5H1669"/>
        <path class="sig-blue" d="M1644 518.5H1656V508.5H1669"/>
        <path class="sig-orange" d="M1644 530.5H1693"/>
        <text class="legend-text" x="1697" y="500">Step3</text><text class="legend-text" x="1697" y="519">disterpance</text><text class="legend-text" x="1697" y="537">PI_series_controller1</text>
        <use href="#expandIcon" x="1840" y="449" width="16" height="12"/>
      </svg>
    </div>
    <footer class="scope-status"><span>Ready</span><span class="stat-box stat-sample">Sample based</span><span class="stat-box stat-time">T=10.000</span></footer>
  </section>

  <!-- Scope -->
  <section class="scope scope-zero">
    <header class="scope-title">
      <svg width="20" height="20"><use href="#matlabIcon"/></svg><span>Scope</span>
      <div class="win-btns">
        <svg width="14" height="14" viewBox="0 0 14 14"><path d="M1 7.5H13" stroke="currentColor"/></svg>
        <svg width="12" height="14" viewBox="0 0 12 14"><rect x="0.5" y="1.5" width="11" height="11" rx="2" fill="none" stroke="currentColor"/></svg>
        <svg width="14" height="14" viewBox="0 0 14 14"><path d="M1 1L13 13M13 1L1 13" stroke="currentColor" stroke-width="1.1"/></svg>
      </div>
    </header>
    <nav class="scope-menu">
      <span>File</span><span>Tools</span><span>View</span><span>Simulation</span><span>Help</span>
      <svg class="dock" width="10" height="12"><use href="#dockIcon"/></svg>
    </nav>
    <div class="scope-tools"><svg width="390" height="32"><use href="#scopeTools"/></svg></div>
    <div class="scope-plot">
      <svg viewBox="1119 108 724 208">
        <rect class="axes" x="1138.5" y="119.5" width="688" height="171"/>
        <path class="grid" d="M1207.5 120V290M1276 120V290M1345 120V290M1413.5 120V290M1482.5 120V290M1551.5 120V290M1620 120V290M1689 120V290M1757.5 120V290M1139 129.5H1826M1139 165.5H1826M1139 201.5H1826M1139 237.5H1826M1139 273.5H1826"/>
        <g class="data" transform="translate(1138.5 273.5) scale(68.8 -3.6)">
          <path class="sig-blue" d="M0 0H1V2L10 38"/>
          <path class="sig-yellow" d="M0 0H1V2L10 20"/>
          <path class="sig-orange" d="M0 0H1V2L10 38"/>
        </g>
        <text class="tick tick-y" x="1135" y="136">40</text><text class="tick tick-y" x="1135" y="172">30</text><text class="tick tick-y" x="1135" y="208">20</text><text class="tick tick-y" x="1135" y="244">10</text><text class="tick tick-y" x="1135" y="281">0</text>
        <g class="tick tick-x">
          <text x="1138.5" y="308">0</text><text x="1207.3" y="308">1</text><text x="1276.1" y="308">2</text><text x="1344.9" y="308">3</text><text x="1413.7" y="308">4</text><text x="1482.5" y="308">5</text><text x="1551.3" y="308">6</text><text x="1620.1" y="308">7</text><text x="1688.9" y="308">8</text><text x="1757.7" y="308">9</text><text x="1826.5" y="308">10</text>
        </g>
        <rect class="legend" x="1631.5" y="128.5" width="182" height="56"/>
        <path class="sig-yellow" d="M1636 138.5H1686"/>
        <path class="sig-blue" d="M1636 156.5H1686"/>
        <path class="sig-orange" d="M1636 174.5H1686"/>
        <text class="legend-text" x="1690" y="146">PI_parllel_controller</text><text class="legend-text" x="1690" y="163">PI_series_controller</text><text class="legend-text" x="1690" y="181">PI_ideal_controller</text>
        <use href="#expandIcon" x="1824" y="109" width="16" height="12"/>
      </svg>
    </div>
    <footer class="scope-status"><span>Ready</span><span class="stat-box stat-sample">Sample based</span><span class="stat-box stat-time">T=10.000</span></footer>
  </section>

  <!-- Scope3, the active window, runs off the bottom of the screen -->
  <section class="scope scope-three">
    <header class="scope-title">
      <svg width="20" height="20"><use href="#matlabIcon"/></svg><span>Scope3</span>
      <div class="win-btns">
        <svg width="14" height="14" viewBox="0 0 14 14"><path d="M1 7.5H13" stroke="currentColor"/></svg>
        <svg width="12" height="14" viewBox="0 0 12 14"><rect x="0.5" y="1.5" width="11" height="11" rx="2" fill="none" stroke="currentColor"/></svg>
        <svg width="14" height="14" viewBox="0 0 14 14"><path d="M1 1L13 13M13 1L1 13" stroke="currentColor" stroke-width="1.1"/></svg>
      </div>
    </header>
    <nav class="scope-menu">
      <span>File</span><span>Tools</span><span>View</span><span>Simulation</span><span>Help</span>
      <svg class="dock" width="10" height="12"><use href="#dockIcon"/></svg>
    </nav>
    <div class="scope-tools"><svg width="390" height="32"><use href="#scopeTools"/></svg></div>
    <div class="scope-plot">
      <svg viewBox="112 803 766 214">
        <rect class="axes" x="134.5" y="830.5" width="726" height="161"/>
        <path class="grid" d="M207 831V991M279.5 831V991M352 831V991M424.5 831V991M497.5 831V991M570 831V991M642.5 831V991M715 831V991M787.5 831V991M135 846.5H860M135 872.5H860M135 898.5H860M135 923.5H860M135 949.5H860M135 975.5H860"/>
        <g class="data" transform="translate(134.3 975.3) scale(72.59 -129)">
          <path class="sig-yellow" d="M0 0H1V1H10"/>
          <path class="sig-blue" d="M0 0H1L1.2 .05 1.4 .2 1.6 .38 1.8 .55 2 .69 2.2 .81 2.4 .91 2.6 .97 2.8 .995 3 1 3.2 .985 3.5 .955 3.8 .9 4 .88V.48L4.2 .49 4.4 .53 4.6 .59 4.8 .65 5 .72 5.2 .79 5.4 .84 5.6 .875 5.8 .895 6 .905 6.3 .905 6.6 .895 7 .88 8 .88 9 .9 10 .925"/>
          <path class="sig-orange" d="M0 0H1L1.2 .03 1.4 .12 1.6 .24 1.8 .37 2 .49 2.2 .6 2.4 .69 2.6 .75 2.8 .8 3 .825 3.2 .835 3.5 .84 3.8 .83 4 .825V.42L4.2 .425 4.4 .45 4.6 .485 4.8 .53 5 .58 5.3 .64 5.6 .69 6 .735 6.4 .755 6.8 .765 7.3 .77 8 .775 9 .79 10 .815"/>
        </g>
        <text class="tick tick-y" x="130" y="851">1</text><text class="tick tick-y" x="130" y="877">0.8</text><text class="tick tick-y" x="130" y="903">0.6</text><text class="tick tick-y" x="130" y="928">0.4</text><text class="tick tick-y" x="130" y="954">0.2</text><text class="tick tick-y" x="130" y="980">0</text>
        <g class="tick tick-x">
          <text x="134.3" y="1009">0</text><text x="206.9" y="1009">1</text><text x="279.5" y="1009">2</text><text x="352.1" y="1009">3</text><text x="424.7" y="1009">4</text><text x="497.3" y="1009">5</text><text x="569.8" y="1009">6</text><text x="642.4" y="1009">7</text><text x="715" y="1009">8</text><text x="787.6" y="1009">9</text><text x="860.2" y="1009">10</text>
        </g>
        <text class="plot-title" x="496" y="824">PI_series_controller1, PI_parllel_controller1</text>
        <rect class="legend" x="657.5" y="839.5" width="190" height="56"/>
        <path class="sig-yellow" d="M662 856.5H674V846.5H687"/>
        <path class="sig-blue" d="M662 868.5H712"/>
        <path class="sig-orange" d="M662 886.5H712"/>
        <text class="legend-text" x="716" y="856">Step4</text><text class="legend-text" x="716" y="874">PI_series_controller1</text><text class="legend-text" x="716" y="892">PI_parllel_controller1</text>
        <use href="#expandIcon" x="859" y="805" width="16" height="12"/>
      </svg>
    </div>
    <div class="scope-cut"></div>
  </section>

</div>
</body>
</html>
```

FILE: styles.css
```css
html, body {
  margin: 0;
  padding: 0;
  height: 100%;
  overflow: hidden;
  background: #f0f0f0;
}

.defs {
  position: absolute;
}

.app {
  position: relative;
  width: 1921px;
  height: 1021px;
  overflow: hidden;
  display: flex;
  flex-direction: column;
  font-family: "Open Sans", "Noto Sans", sans-serif;
  font-size: 14px;
  color: #333;
  background: #f3f3f3;
}

/* title bar */
.titlebar {
  height: 29px;
  flex: none;
  display: flex;
  align-items: center;
  padding-left: 2px;
  background: #f3f3f3;
}

.title-text {
  margin-left: 5px;
  color: #7d7d7d;
  font-size: 16px;
}

.title-close {
  margin-left: auto;
  margin-right: 27px;
}

/* ribbon tabs */
.tabs {
  height: 35px;
  flex: none;
  display: flex;
  background: #003f72;
  padding-left: 4px;
}

.tab {
  width: 132.6px;
  display: flex;
  align-items: center;
  justify-content: center;
  color: #fff;
  font-size: 13px;
}

.tab-active {
  width: 125px;
  margin-top: 4px;
  margin-right: 3px;
  background: #f5f5f5;
  color: #333;
  border-radius: 3px 3px 0 0;
}

.tab-signal {
  background: #1271bd;
}

.quick-access {
  margin: 4px 13px 4px auto;
  width: 65px;
  display: flex;
  align-items: center;
  gap: 21px;
  padding-left: 3px;
  box-sizing: border-box;
  background: #5d86a8;
}

.caret {
  display: inline-block;
  width: 0;
  height: 0;
  border-left: 5px solid transparent;
  border-right: 5px solid transparent;
  border-top: 6px solid #5a5a5a;
}

.caret-black {
  border-top-color: #111;
}

.caret-big {
  border-left-width: 6px;
  border-right-width: 6px;
  border-top-width: 7px;
  margin-left: auto;
  margin-right: 5px;
}

/* ribbon */
.ribbon {
  height: 115px;
  flex: none;
  display: flex;
  background: #f5f5f5;
  border-bottom: 1px solid #999;
}

.rib-group {
  display: flex;
  flex-direction: column;
  flex: none;
  background: linear-gradient(#c8c8c8, #c8c8c8) right 10px / 1px calc(100% - 10px) no-repeat;
}

.group-file { width: 176px; }
.group-library { width: 74px; }
.group-prepare { width: 363px; }
.group-simulate { width: 457px; }

.group-review {
  width: 300px;
  background: none;
}

.rib-body {
  flex: 1;
  display: flex;
  min-height: 0;
}

.rib-label {
  height: 17px;
  flex: none;
  line-height: 19px;
  text-align: center;
  font-size: 12.5px;
  color: #7a7a7a;
}

.rib-collapse {
  align-self: flex-end;
  margin-left: auto;
  margin-right: 8px;
  margin-bottom: 3px;
}

.rb {
  display: flex;
  flex-direction: column;
  align-items: center;
  flex: none;
  padding-top: 13px;
  line-height: 20px;
  color: #3c3c3c;
}

.rb-icon {
  margin-bottom: 9px;
  flex: none;
}

.rb-line {
  height: 20px;
  display: flex;
  align-items: center;
  gap: 9px;
}

.rb-new { width: 50px; }
.rb-wide { width: 74px; }
.rb-back { width: 74px; margin-left: 4px; }
.rb-run { width: 68px; }
.rb-forward { width: 78px; }
.rb-stop { width: 56px; color: #b0b0b0; }

.file-list {
  margin-left: 4px;
  padding-top: 5px;
}

.file-row {
  height: 30px;
  display: flex;
  align-items: center;
  gap: 7px;
  color: #3c3c3c;
}

.file-row .caret {
  margin-left: 11px;
}

.prepare-box {
  margin: 8px 5px 0 4px;
  height: 85px;
  flex: 1;
  box-sizing: border-box;
  display: flex;
  border: 1px solid #c2c2c2;
  border-radius: 4px;
}

.prepare-items {
  width: 328px;
  box-sizing: border-box;
  padding-left: 7px;
  display: flex;
  background: #fff;
  border-right: 1px solid #c2c2c2;
}

.rb-prep {
  width: 105px;
  padding-top: 8px;
}

.prepare-drop {
  flex: 1;
  display: flex;
  align-items: center;
  justify-content: center;
}

.sim-form {
  width: 165px;
  margin-left: 4px;
  padding-top: 6px;
  color: #3c3c3c;
}

.stop-row {
  height: 28px;
  display: flex;
  align-items: center;
  justify-content: space-between;
  padding-left: 3px;
}

.stop-input {
  width: 80px;
  height: 28px;
  box-sizing: border-box;
  padding-left: 6px;
  line-height: 26px;
  background: #fff;
  border: 1px solid #8a8a8a;
}

.mode-select {
  height: 27px;
  margin-top: 4px;
  box-sizing: border-box;
  display: flex;
  align-items: center;
  justify-content: space-between;
  padding: 0 12px 0 6px;
  border: 1px solid #8a8a8a;
  border-radius: 6px;
}

.restart-row {
  margin-top: 6px;
  height: 20px;
  display: flex;
  align-items: center;
  gap: 8px;
  padding-left: 3px;
}

.review-box {
  margin: 8px 0 0 4px;
  width: 226px;
  height: 85px;
  box-sizing: border-box;
  background: #fff;
  border: 1px solid #c2c2c2;
}

.rb-review {
  width: 112px;
  padding-top: 8px;
}

/* workspace */
.workspace {
  flex: 1;
  display: flex;
  min-height: 0;
}

.left-rail {
  width: 32px;
  flex: none;
  border-right: 1px solid #a8a8a8;
}

.right-rail {
  width: 36px;
  flex: none;
  border-left: 1px solid #a8a8a8;
}

.side-tab {
  width: 24px;
  box-sizing: border-box;
  writing-mode: vertical-rl;
  background: #fff;
  border: 1px solid #d0d0d0;
  font-family: "Liberation Sans", sans-serif;
  font-size: 13.7px;
  line-height: 22px;
  color: #111;
  text-align: center;
}

.side-tab-left {
  height: 108px;
  margin: 1px 0 0 1px;
  transform: rotate(180deg);
}

.side-tab-right {
  height: 127px;
  margin: 3px 0 0 8px;
}

.main {
  flex: 1;
  min-width: 0;
  display: flex;
  flex-direction: column;
  background: #efefef;
}

.doc-tabs {
  height: 29px;
  flex: none;
  box-sizing: border-box;
  margin-left: 2px;
  padding-left: 9px;
  display: flex;
  align-items: center;
  gap: 17px;
  border-bottom: 2px solid #9a9a9a;
}

.doc-tab {
  align-self: flex-end;
  width: 94px;
  height: 26px;
  box-sizing: border-box;
  padding-top: 3px;
  margin-left: -7px;
  display: flex;
  align-items: center;
  justify-content: center;
  background: #fff;
  font-size: 13px;
  color: #222;
}

.doc-keys {
  margin-left: auto;
  margin-right: 9px;
}

.doc-body {
  flex: 1;
  display: flex;
  min-height: 0;
}

.tool-col {
  width: 41px;
  flex: none;
  display: flex;
  flex-direction: column;
}

.tool-slot {
  height: 35px;
  flex: none;
  display: flex;
  align-items: center;
  justify-content: center;
}

.tool-sep {
  width: 24px;
  margin: 5px auto 5px;
  border: 0;
  border-top: 1px solid #bbb;
}

.tool-text {
  width: 18px;
  height: 14px;
  line-height: 13px;
  text-align: center;
  background: #f4f4f4;
  border: 1px solid #888;
  font-family: "Liberation Sans", sans-serif;
  font-size: 10px;
  font-weight: 700;
  color: #333;
}

.tool-rect {
  width: 16px;
  height: 15px;
  background: #e8e8f8;
  border: 2px solid #b4b4b4;
}

.tool-bottom {
  margin-top: auto;
}

.doc {
  flex: 1;
  min-width: 0;
  display: flex;
  flex-direction: column;
  margin-right: 1px;
  border-left: 1px solid #8a8a92;
  border-right: 1px solid #9a9a9a;
}

.address {
  height: 37px;
  flex: none;
  box-sizing: border-box;
  padding: 3px 2px 4px 1px;
  background: #f5f5f5;
}

.address-inner {
  height: 30px;
  display: flex;
  align-items: center;
  padding-left: 2px;
  background: #fff;
  font-size: 14.5px;
  color: #222;
}

.address-icon {
  width: 20px;
  height: 20px;
  display: flex;
  align-items: center;
  justify-content: center;
  background: #f0f0f0;
  border: 1px solid #999;
  box-sizing: border-box;
}

.address-name {
  margin-left: 3px;
}

.crumb {
  margin-left: 9px;
  width: 0;
  height: 0;
  border-top: 5px solid transparent;
  border-bottom: 5px solid transparent;
  border-left: 7px solid #111;
}

.hint {
  height: 39px;
  flex: none;
  box-sizing: border-box;
  display: flex;
  align-items: center;
  padding: 0 0 0 8px;
  gap: 8px;
  background: #fdfdd0;
  border-top: 3px double #9a9aa6;
  border-bottom: 1px solid #999;
  font-family: "Liberation Sans", sans-serif;
  font-size: 17px;
  color: #111;
}

.hint-text {
  white-space: nowrap;
}

.hint-link {
  color: #0000ee;
  text-decoration: underline;
}

.hint-close {
  margin-left: auto;
  margin-right: 8px;
  width: 24px;
  height: 23px;
  line-height: 21px;
  box-sizing: border-box;
  text-align: center;
  font-size: 13px;
  font-weight: 700;
  color: #333;
  background: #f4f4e4;
  border: 1px solid #ccc;
  border-radius: 4px;
}

.canvas {
  flex: 1;
  min-height: 0;
  overflow: hidden;
  background: #fff;
  border-bottom: 1px solid #8a8a92;
}

.diagram {
  display: block;
  font-family: "Liberation Sans", sans-serif;
}

.wire {
  fill: none;
  stroke: #000;
  stroke-width: 1.3;
  marker-end: url(#arrow);
}

.wire.plain {
  marker-end: none;
}

.wire-selected {
  stroke: #0f5f9e;
}

.wire-glow {
  fill: none;
  stroke: #4fb8f8;
  stroke-width: 5;
}

.glow-tip {
  fill: #4fb8f8;
  stroke: #4fb8f8;
  stroke-width: 2;
}

.dots circle {
  fill: #000;
}

.blk-text {
  font-size: 10px;
  letter-spacing: -0.5px;
  fill: #222;
  text-anchor: middle;
}

.blk-label {
  font-size: 10.1px;
  fill: #333;
  text-anchor: middle;
}

.sum-sign {
  font-size: 10px;
  fill: #222;
}

.tf-num, .tf-den {
  font-family: "Liberation Serif", serif;
  font-size: 11.5px;
  fill: #111;
  text-anchor: middle;
}

.tf-line {
  stroke: #222;
  stroke-width: 1;
}

/* status bar */
.statusbar {
  height: 28px;
  flex: none;
  display: grid;
  grid-template-columns: 972px 60px 1fr;
  align-items: center;
  background: #f0f0f0;
  border-bottom: 1px solid #333;
  color: #333;
}

.status-ready {
  padding-left: 6px;
}

.status-solver {
  justify-self: end;
  padding-right: 8px;
  font-size: 16.5px;
  color: #2b4c8c;
}

/* scope windows */
.scope {
  position: absolute;
  display: flex;
  flex-direction: column;
  overflow: hidden;
  border-radius: 9px;
  background: #f0f0f0;
  box-shadow: 0 0 0 1px #a9a9a9, 0 6px 32px rgba(0, 0, 0, 0.42);
}

.scope-zero { left: 1119px; top: 4px; width: 724px; height: 342px; }
.scope-one { left: 1124px; top: 344px; width: 734px; height: 327px; }
.scope-two { left: 1091px; top: 677px; width: 768px; height: 334px; }
.scope-three { left: 112px; top: 699px; width: 766px; height: 322px; border-radius: 9px 9px 0 0; }

.scope-title {
  height: 38px;
  flex: none;
  display: flex;
  align-items: center;
  padding-left: 10px;
  gap: 6px;
  background: #f3f3f3;
  font-size: 14.5px;
  color: #8a8a8a;
}

.scope-three .scope-title {
  background: #f3f1f8;
  color: #222;
}

.win-btns {
  margin-left: auto;
  margin-right: 22px;
  display: flex;
  align-items: center;
  gap: 46px;
  color: #7d7d7d;
}

.scope-three .win-btns {
  color: #111;
}

.scope-menu {
  height: 30px;
  flex: none;
  display: flex;
  align-items: center;
  gap: 16.5px;
  padding-left: 9px;
  background: #fff;
  color: #222;
  font-size: 14.5px;
}

.dock {
  margin-left: auto;
  margin-right: 6px;
}

.scope-tools {
  height: 36px;
  flex: none;
  box-sizing: border-box;
  display: flex;
  align-items: center;
  border-top: 1px solid #aaa;
  border-bottom: 3px double #b0b0b0;
  background: #f0f0f0;
}

.scope-plot {
  flex: 1;
  min-height: 0;
  background: #262626;
}

.scope-plot > svg {
  display: block;
  width: 100%;
  height: 100%;
  font-family: "Liberation Sans", sans-serif;
}

.scope-cut {
  height: 4px;
  flex: none;
  background: #fafafa;
}

.axes {
  fill: #000;
  stroke: #bdbdbd;
  shape-rendering: crispEdges;
}

.grid {
  fill: none;
  stroke: #6e6e6e;
  shape-rendering: crispEdges;
}

.data path {
  vector-effect: non-scaling-stroke;
}

.sig-yellow, .sig-blue, .sig-orange {
  fill: none;
  stroke-width: 1.5;
}

.sig-yellow { stroke: #ffff00; }
.sig-blue { stroke: #0a9cf0; }
.sig-orange { stroke: #f2591d; }

.tick {
  font-size: 14px;
  fill: #b4b4b4;
}

.tick-y {
  text-anchor: end;
}

.tick-x {
  text-anchor: middle;
}

.plot-title {
  font-size: 16.6px;
  fill: #9a9a9a;
  text-anchor: middle;
}

.legend {
  fill: #000;
  stroke: #f0f0f0;
  shape-rendering: crispEdges;
}

.legend-text {
  font-size: 13.3px;
  fill: #d8d8d8;
}

.scope-status {
  height: 30px;
  flex: none;
  display: flex;
  align-items: center;
  gap: 4px;
  padding: 0 3px 0 2px;
  font-size: 13px;
  color: #222;
}

.stat-box {
  height: 22px;
  line-height: 20px;
  box-sizing: border-box;
  padding-left: 3px;
  font-size: 12.6px;
  border: 1px solid #d8d8d8;
  border-right-color: #fff;
  border-bottom-color: #fff;
}

.stat-sample {
  width: 94px;
  margin-left: auto;
}

.stat-time {
  width: 64px;
}
```
